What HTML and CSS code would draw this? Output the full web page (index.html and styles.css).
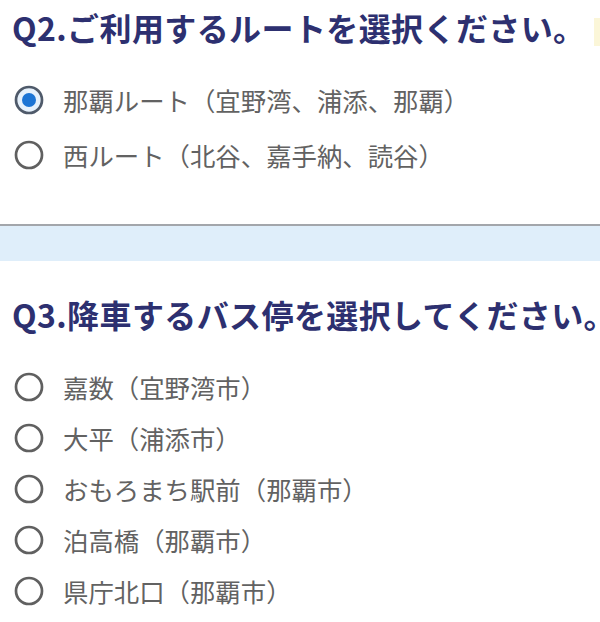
FILE: index.html
```html
<!DOCTYPE html>
<html lang="ja">
<head>
<meta charset="utf-8">
<link rel="stylesheet" href="styles.css">
</head>
<body>
<section class="q q2">
  <h2 class="q-title">Q2.ご利用するルートを選択ください。</h2>
  <span class="edge-mark"></span>
  <ul class="opts opts-route">
    <li class="opt">
      <svg class="radio" viewBox="0 0 32 32"><circle cx="16" cy="16" r="13" class="ring-on"/><circle cx="16" cy="16" r="7" class="dot"/></svg>
      <span class="label">那覇ルート（宜野湾、浦添、那覇）</span>
    </li>
    <li class="opt">
      <svg class="radio" viewBox="0 0 32 32"><circle cx="16" cy="16" r="13" class="ring"/></svg>
      <span class="label">西ルート（北谷、嘉手納、読谷）</span>
    </li>
  </ul>
</section>
<div class="divider"></div>
<section class="q q3">
  <h2 class="q-title">Q3.降車するバス停を選択してください。</h2>
  <ul class="opts opts-stop">
    <li class="opt">
      <svg class="radio" viewBox="0 0 32 32"><circle cx="16" cy="16" r="13" class="ring"/></svg>
      <span class="label">嘉数（宜野湾市）</span>
    </li>
    <li class="opt">
      <svg class="radio" viewBox="0 0 32 32"><circle cx="16" cy="16" r="13" class="ring"/></svg>
      <span class="label">大平（浦添市）</span>
    </li>
    <li class="opt">
      <svg class="radio" viewBox="0 0 32 32"><circle cx="16" cy="16" r="13" class="ring"/></svg>
      <span class="label">おもろまち駅前（那覇市）</span>
    </li>
    <li class="opt">
      <svg class="radio" viewBox="0 0 32 32"><circle cx="16" cy="16" r="13" class="ring"/></svg>
      <span class="label">泊高橋（那覇市）</span>
    </li>
    <li class="opt">
      <svg class="radio" viewBox="0 0 32 32"><circle cx="16" cy="16" r="13" class="ring"/></svg>
      <span class="label">県庁北口（那覇市）</span>
    </li>
  </ul>
</section>
</body>
</html>
```
FILE: styles.css
```css
html, body {
  margin: 0;
  padding: 0;
  background: #fff;
  overflow: hidden;
}
body {
  width: 600px;
  height: 622px;
  font-family: "Noto Sans CJK JP", "Noto Sans", sans-serif;
}
.q {
  position: relative;
  padding-left: 12px;
}
.q2 {
  padding-top: 7px;
  padding-bottom: 42px;
}
.q3 {
  padding-top: 33px;
}
.q-title {
  margin: 0;
  font-size: 32px;
  line-height: 40px;
  font-weight: 700;
  color: #2d3070;
  white-space: nowrap;
  letter-spacing: 0.4px;
  font-feature-settings: "halt";
}
.edge-mark {
  position: absolute;
  right: 0;
  top: 18px;
  width: 6px;
  height: 28px;
  background: #fbf6d8;
}
.opts {
  list-style: none;
  margin: 0;
  padding: 0;
}
.opts-route {
  margin-top: 25px;
}
.opts-route .opt {
  height: 55px;
}
.opts-stop {
  margin-top: 27px;
}
.opts-stop .opt {
  height: 51px;
}
.opt {
  display: flex;
  align-items: center;
  gap: 18px;
  margin-left: 1px;
}
.radio {
  width: 32px;
  height: 32px;
  flex: none;
}
.ring {
  fill: #fff;
  stroke: #606060;
  stroke-width: 2.7;
}
.ring-on {
  fill: #e6f1fc;
  stroke: #4f5a6a;
  stroke-width: 2.7;
}
.dot {
  fill: #1c74d4;
}
.label {
  font-size: 25.4px;
  line-height: 32px;
  color: #626262;
  white-space: nowrap;
}
.divider {
  height: 35px;
  border-top: 2px solid #a3a6ab;
  background: #dfeefa;
}
```
